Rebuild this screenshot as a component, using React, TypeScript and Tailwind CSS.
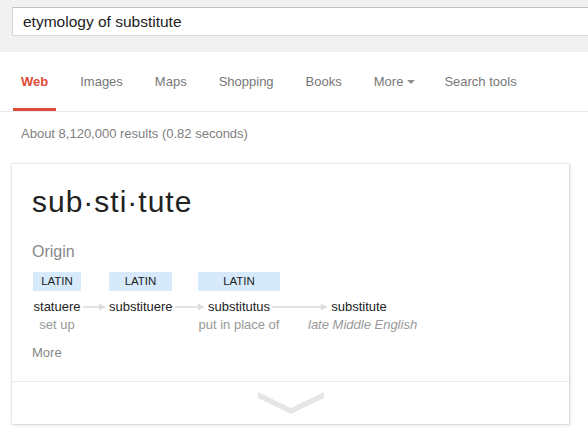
import React from "react";

const tabs = ["Web", "Images", "Maps", "Shopping", "Books", "More", "Search tools"];

type Step = { lang?: string; word: string; sense?: string; italic?: boolean };

const steps: Step[] = [
  { lang: "LATIN", word: "statuere", sense: "set up" },
  { lang: "LATIN", word: "substituere" },
  { lang: "LATIN", word: "substitutus", sense: "put in place of" },
  { word: "substitute", sense: "late Middle English", italic: true },
];

function ArrowHead() {
  return (
    <svg
      width="6"
      height="8"
      viewBox="0 0 6 8"
      className="absolute left-[-10px] top-1/2 -translate-y-1/2"
    >
      <polygon points="0,0.5 6,4 0,7.5" fill="#dcdcdc" />
    </svg>
  );
}

function Line() {
  return <div className="h-[2px] bg-[#e3e3e3]" />;
}

function Chevron() {
  return (
    <svg width="66" height="22" viewBox="0 0 66 22">
      <polygon points="0,0 33,16 66,0 66,6 33,22 0,6" fill="#e6e6e6" />
    </svg>
  );
}

export default function App() {
  const last = steps.length - 1;
  return (
    <div className="w-[588px] h-[442px] overflow-hidden bg-white font-['Liberation_Sans',Arial,sans-serif]">
      {/* search bar */}
      <div className="h-[52px] overflow-hidden bg-[#f1f1f1] pl-[12px] pt-[7px]">
        <div className="flex h-[29px] w-[600px] items-center border border-[#d9d9d9] border-t-[#c0c0c0] bg-white pl-[10px] text-[15.5px] text-[#222]">
          etymology of substitute
        </div>
      </div>

      {/* tabs */}
      <nav className="flex h-[60px] border-b border-[#ebebeb] pl-[13px]">
        {tabs.map((t, i) => (
          <div
            key={t}
            className={`flex flex-col px-[8px] ${
              i === 0 ? "" : t === "Search tools" ? "ml-[13px]" : "ml-[16px]"
            }`}
          >
            <div
              className={`flex flex-1 items-start pt-[22px] text-[13px] leading-[16px] ${
                i === 0 ? "font-bold text-[#dd4b39]" : "text-[#777]"
              }`}
            >
              {t}
              {t === "More" && (
                <span className="ml-[4px] mt-[6px] h-0 w-0 border-l-[4px] border-r-[4px] border-t-[4px] border-l-transparent border-r-transparent border-t-[#909090]" />
              )}
            </div>
            <div className={`mx-[-8px] h-[3px] ${i === 0 ? "bg-[#dd4b39]" : ""}`} />
          </div>
        ))}
      </nav>

      <div className="pl-[21px] pt-[14px] text-[13px] leading-[16px] text-[#808080]">
        About 8,120,000 results (0.82 seconds)
      </div>

      {/* etymology card */}
      <div className="ml-[12px] mt-[22px] w-[557px] bg-white shadow-[0_0_0_1px_rgba(0,0,0,0.06),1px_1px_4px_rgba(0,0,0,0.14)]">
        <div className="px-[20px] pb-[20px] pt-[20px]">
          <div className="text-[30px] leading-[36px] tracking-[1px] text-[#222]">sub·sti·tute</div>
          <div className="mt-[22px] text-[16px] leading-[20px] text-[#878787]">Origin</div>

          <div className="ml-[1px] mt-[10px] grid grid-cols-[48px_28px_63px_26px_82px_28px_102px]">
            {/* language labels */}
            {steps.map((s, i) => (
              <React.Fragment key={"l" + i}>
                <div
                  className="flex h-[19px] items-center justify-center bg-[#d6eafc] text-[11.5px] text-[#222]"
                  style={{ visibility: s.lang ? "visible" : "hidden" }}
                >
                  {s.lang}
                </div>
                {i < last && <div />}
              </React.Fragment>
            ))}

            {/* words joined by arrows */}
            {steps.map((s, i) => (
              <React.Fragment key={"w" + i}>
                <div className="mt-[8px] flex items-center text-[13px] leading-[16px] text-[#222]">
                  <div className="min-w-0 flex-1">{i > 0 && <Line />}</div>
                  <span className="relative whitespace-nowrap">
                    {i > 0 && (
                      <>
                        <span className="absolute left-[-4px] top-0 h-full w-[4px] bg-white" />
                        <ArrowHead />
                      </>
                    )}
                    {s.word}
                    {i < last && (
                      <span className="absolute right-[-2px] top-0 h-full w-[2px] bg-white" />
                    )}
                  </span>
                  <div className="min-w-0 flex-1">{i < last && <Line />}</div>
                </div>
                {i < last && (
                  <div className="mt-[8px] flex items-center">
                    <div className="flex-1">
                      <Line />
                    </div>
                  </div>
                )}
              </React.Fragment>
            ))}

            {/* senses */}
            {steps.map((s, i) => (
              <React.Fragment key={"s" + i}>
                <div
                  className={`mt-[2px] whitespace-nowrap text-center text-[13px] leading-[16px] text-[#999] ${
                    s.italic ? "italic" : ""
                  }`}
                >
                  {s.sense}
                </div>
                {i < last && <div />}
              </React.Fragment>
            ))}
          </div>

          <div className="mt-[12px] text-[13px] leading-[16px] text-[#878787]">More</div>
        </div>
        <div className="flex h-[43px] justify-center border-t border-[#ebebeb] pt-[10px]">
          <Chevron />
        </div>
      </div>
    </div>
  );
}
